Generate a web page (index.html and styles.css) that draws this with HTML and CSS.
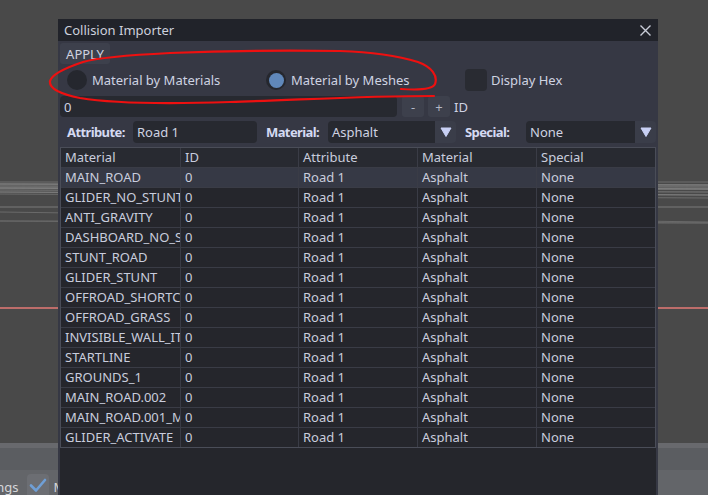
FILE: index.html
```html
<!DOCTYPE html>
<html>
<head>
<meta charset="utf-8">
<link rel="stylesheet" href="styles.css">
</head>
<body>
<svg class="viewport" width="708" height="495" viewBox="0 0 708 495">
  <g stroke-width="1" fill="none">
    <line x1="0" y1="182" x2="708" y2="182" stroke="#6e6e6e"/>
    <line x1="0" y1="184" x2="708" y2="185" stroke="#9a9a9a"/>
    <line x1="0" y1="186" x2="708" y2="187" stroke="#858585"/>
    <line x1="0" y1="188" x2="708" y2="189" stroke="#a3a3a3"/>
    <line x1="0" y1="190" x2="708" y2="192" stroke="#7a7a7a"/>
    <line x1="0" y1="192" x2="708" y2="195" stroke="#8c8c8c"/>
    <line x1="0" y1="194" x2="708" y2="198" stroke="#6c6c6c"/>
    <line x1="0" y1="207" x2="708" y2="207" stroke="#7a7a7a"/>
    <line x1="0" y1="212" x2="708" y2="222" stroke="#6a6a6a"/>
    <line x1="0" y1="221" x2="708" y2="223" stroke="#777777"/>
    <line x1="0" y1="308" x2="708" y2="308" stroke="#e47a76" stroke-width="1.5"/>
  </g>
</svg>
<div class="bottombar">
  <div class="bb-strip"></div>
  <div class="bb-mid"></div>
  <div class="bb-low">
    <span class="bb-text">Settings</span>
    <span class="bb-check"><svg width="22" height="22" viewBox="0 0 22 22"><path d="M4 11.5 L9 16.5 L18 6" fill="none" stroke="#6f9fd6" stroke-width="2.6" stroke-linecap="round" stroke-linejoin="round"/></svg></span>
    <span class="bb-text2">Mesh</span>
  </div>
</div>
<div class="window">
  <div class="titlebar">
    <span class="title">Collision Importer</span>
    <svg class="close" width="11" height="11" viewBox="0 0 11 11"><path d="M0.5 0.5 L10.5 10.5 M10.5 0.5 L0.5 10.5" stroke="#c9cdd9" stroke-width="1.4" fill="none"/></svg>
  </div>
  <div class="content">
    <div class="toolbar"><span class="btn apply">APPLY</span></div>
    <div class="options">
      <div class="opt"><span class="radio"></span><span class="lbl">Material by Materials</span></div>
      <div class="opt"><span class="radio on"><span class="dot"></span></span><span class="lbl">Material by Meshes</span></div>
      <div class="opt opt3"><span class="checkbox"></span><span class="lbl">Display Hex</span></div>
    </div>
    <div class="spinrow">
      <span class="field spin">0</span>
      <span class="btn small">-</span>
      <span class="btn small">+</span>
      <span class="idlbl">ID</span>
    </div>
    <div class="filters">
      <div class="fgroup g1"><span class="flabel">Attribute:</span><span class="field ftext w1">Road 1</span></div>
      <div class="fgroup g2"><span class="flabel">Material:</span><span class="dropdown w2"><span class="dtext">Asphalt</span><span class="darrow"><svg width="12" height="10" viewBox="0 0 12 10"><path d="M1 1 L11 1 L6 9.5 Z" fill="#c8d0f4" stroke="#c8d0f4" stroke-width="1" stroke-linejoin="round"/></svg></span></span></div>
      <div class="fgroup g3"><span class="flabel">Special:</span><span class="dropdown w3"><span class="dtext">None</span><span class="darrow"><svg width="12" height="10" viewBox="0 0 12 10"><path d="M1 1 L11 1 L6 9.5 Z" fill="#c8d0f4" stroke="#c8d0f4" stroke-width="1" stroke-linejoin="round"/></svg></span></span></div>
    </div>
    <div class="tablewrap">
      <div class="grid">
        <div class="row head"><span>Material</span><span>ID</span><span>Attribute</span><span>Material</span><span>Special</span></div>
        <div class="row sel"><span>MAIN_ROAD</span><span>0</span><span>Road 1</span><span>Asphalt</span><span>None</span></div>
        <div class="row"><span>GLIDER_NO_STUNT</span><span>0</span><span>Road 1</span><span>Asphalt</span><span>None</span></div>
        <div class="row"><span>ANTI_GRAVITY</span><span>0</span><span>Road 1</span><span>Asphalt</span><span>None</span></div>
        <div class="row"><span>DASHBOARD_NO_STUNT</span><span>0</span><span>Road 1</span><span>Asphalt</span><span>None</span></div>
        <div class="row"><span>STUNT_ROAD</span><span>0</span><span>Road 1</span><span>Asphalt</span><span>None</span></div>
        <div class="row"><span>GLIDER_STUNT</span><span>0</span><span>Road 1</span><span>Asphalt</span><span>None</span></div>
        <div class="row"><span>OFFROAD_SHORTCUT</span><span>0</span><span>Road 1</span><span>Asphalt</span><span>None</span></div>
        <div class="row"><span>OFFROAD_GRASS</span><span>0</span><span>Road 1</span><span>Asphalt</span><span>None</span></div>
        <div class="row"><span>INVISIBLE_WALL_ITEM</span><span>0</span><span>Road 1</span><span>Asphalt</span><span>None</span></div>
        <div class="row"><span>STARTLINE</span><span>0</span><span>Road 1</span><span>Asphalt</span><span>None</span></div>
        <div class="row"><span>GROUNDS_1</span><span>0</span><span>Road 1</span><span>Asphalt</span><span>None</span></div>
        <div class="row"><span>MAIN_ROAD.002</span><span>0</span><span>Road 1</span><span>Asphalt</span><span>None</span></div>
        <div class="row"><span>MAIN_ROAD.001_Mesh</span><span>0</span><span>Road 1</span><span>Asphalt</span><span>None</span></div>
        <div class="row last"><span>GLIDER_ACTIVATE</span><span>0</span><span>Road 1</span><span>Asphalt</span><span>None</span></div>
      </div>
    </div>
  </div>
</div>
<svg class="annotation" width="708" height="495" viewBox="0 0 708 495">
  <path d="M401 89 C415 90 432 90 435 84 C438 76 432 67 418 62 C395 55 370 52 340 51 C280 50 220 51 170 53 C130 55 100 57 83 62 C68 67 52 74 50 81 C49 88 60 94 80 98 C110 103 170 104 230 102 C300 100 360 96 434 96" fill="none" stroke="#ee1010" stroke-width="2.2" stroke-linecap="round"/>
</svg>
</body>
</html>
```

FILE: styles.css
```css
* { box-sizing: border-box; }
html, body {
  margin: 0;
  padding: 0;
  width: 708px;
  height: 495px;
  overflow: hidden;
  background: #494949;
  font-family: "Noto Sans", "Open Sans", sans-serif;
  font-size: 13px;
  color: #cfd3e2;
}
body { position: relative; }

.viewport { position: absolute; left: 0; top: 0; }

.bottombar {
  position: absolute;
  left: 0;
  right: 0;
  bottom: 0;
  height: 52px;
  display: flex;
  flex-direction: column;
}
.bb-strip { height: 5px; background: #68696d; }
.bb-mid { height: 22px; background: #5b5d61; }
.bb-low {
  flex: 1;
  background: #636569;
  display: flex;
  align-items: flex-end;
  overflow: hidden;
}
.bb-text {
  margin-left: -31px;
  color: #d6d7da;
  font-size: 13px;
  line-height: 16px;
  margin-bottom: 0;
}
.bb-check {
  margin-left: 9px;
  width: 22px;
  height: 21px;
  background: #6c6e73;
  border-radius: 4px 4px 0 0;
  display: flex;
}
.bb-text2 {
  margin-left: 4px;
  color: #d6d7da;
  line-height: 16px;
  margin-bottom: 0;
}

.window {
  position: absolute;
  left: 58px;
  top: 19px;
  width: 600px;
  height: 480px;
  background: #363844;
  display: flex;
  flex-direction: column;
}
.titlebar {
  height: 22px;
  background: #21232a;
  display: flex;
  align-items: center;
  justify-content: space-between;
  padding: 0 7px 0 6px;
  flex: none;
}
.title { color: #cdd0dc; line-height: 22px; }
.close { display: block; }

.content {
  flex: 1;
  display: flex;
  flex-direction: column;
  padding: 2px 2px 0 2px;
}
.toolbar { height: 21px; display: flex; }
.btn {
  background: #3d404c;
  border-radius: 3px;
  display: flex;
  align-items: center;
  justify-content: center;
  color: #d0d3e0;
}
.apply { width: 50px; height: 21px; }

.options {
  margin-top: 3px;
  height: 26px;
  display: grid;
  grid-template-columns: 199px 199px 198px;
}
.opt {
  display: flex;
  align-items: center;
  padding-left: 7px;
}
.radio {
  width: 20px;
  height: 20px;
  border-radius: 50%;
  background: #25272e;
  display: flex;
  align-items: center;
  justify-content: center;
  flex: none;
}
.dot {
  width: 15px;
  height: 15px;
  border-radius: 50%;
  background: #6088ba;
}
.checkbox {
  width: 22px;
  height: 22px;
  border-radius: 4px;
  background: #292b32;
  flex: none;
}
.lbl { margin-left: 5px; white-space: nowrap; }
.opt3 .lbl { margin-left: 4px; }

.spinrow {
  margin-top: 3px;
  height: 21px;
  display: flex;
  align-items: center;
}
.field {
  background: #272930;
  border-radius: 4px;
  height: 100%;
  display: flex;
  align-items: center;
  padding-left: 4px;
  color: #cfd3e2;
}
.spin { width: 337px; }
.small { width: 22px; height: 21px; margin-left: 5px; color: #b3b7c6; }
.small + .small { margin-left: 4px; }
.idlbl { margin-left: 4px; }

.filters {
  margin-top: 4px;
  height: 22px;
  display: grid;
  grid-template-columns: 198px 198px 200px;
}
.fgroup { display: flex; align-items: center; height: 22px; }
.flabel {
  flex: 1;
  font-weight: bold;
  letter-spacing: -0.6px;
  color: #d5daf2;
  white-space: nowrap;
}
.g1 .flabel { padding-left: 7px; }
.g2 .flabel { padding-left: 8px; }
.g3 .flabel { padding-left: 9px; }
.ftext { padding-left: 4px; }
.w1 { width: 124px; margin-right: 1px; }
.w2 { width: 128px; }
.w3 { width: 130px; }
.dropdown {
  height: 22px;
  display: flex;
  border-radius: 4px;
  overflow: hidden;
}
.dtext {
  flex: 1;
  background: #272930;
  display: flex;
  align-items: center;
  padding-left: 4px;
}
.darrow {
  width: 21px;
  background: #3a3d49;
  display: flex;
  align-items: center;
  justify-content: center;
}
.darrow svg { display: block; }

.tablewrap {
  margin-top: 4px;
  flex: 1;
  background: #25262c;
}
.grid {
  width: 596px;
  border: 1px solid #4a4d58;
  display: flex;
  flex-direction: column;
}
.row {
  display: grid;
  grid-template-columns: 120px 118px 119px 119px 118px;
  height: 20px;
  border-bottom: 1px solid #3a3c46;
}
.row.last { border-bottom: none; height: 19px; }
.row span {
  border-right: 1px solid #3a3c46;
  padding-left: 4px;
  line-height: 19px;
  white-space: nowrap;
  overflow: hidden;
  color: #c9cddd;
}
.row span:last-child { border-right: none; }
.row.head { background: #282a31; }
.row.sel { background: #363945; }

.annotation {
  position: absolute;
  left: 0;
  top: 0;
  pointer-events: none;
}
```
